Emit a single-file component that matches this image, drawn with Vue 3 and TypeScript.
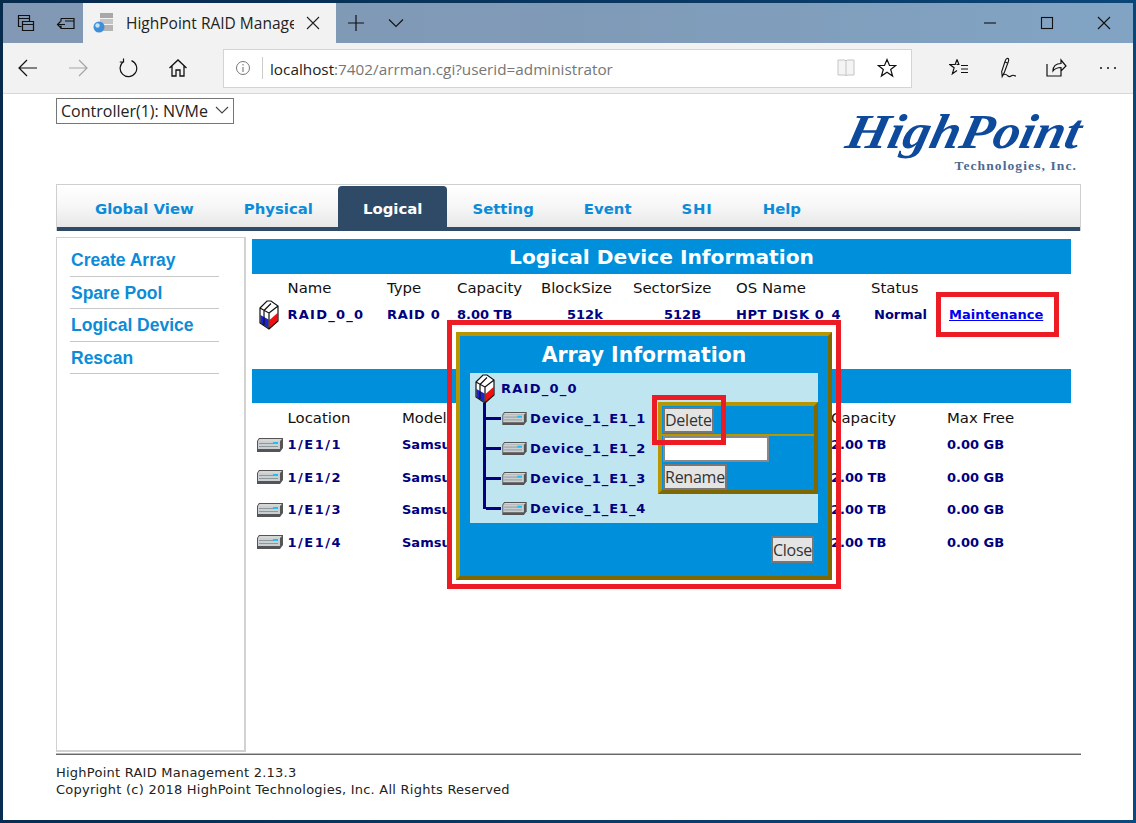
<script setup lang="ts">
const tabs = ['Global View', 'Physical', 'Logical', 'Setting', 'Event', 'SHI', 'Help']
const side = ['Create Array', 'Spare Pool', 'Logical Device', 'Rescan']
const disks = [1, 2, 3, 4]
</script>

<template>
  <div class="window">
    <header class="titlebar">
      <div class="tb-left">
        <svg class="ic" width="20" height="20" viewBox="0 0 20 20"><path d="M2.500 2.500h11v3h-11zM2.500 5.500v8h3M6.500 8.500h11v9h-11zM6.500 11.500h11M13.500 5.500v3" fill="none" stroke="#111" stroke-width="1.200"/></svg>
        <svg class="ic ic2" width="20" height="20" viewBox="0 0 20 20"><path d="M5 5.500h13v10H5v-3M5 8.500v-3M18 8h-9M9 11.500H1.500M4.500 8.500l-3 3 3 3" fill="none" stroke="#111" stroke-width="1.200"/></svg>
      </div>
      <div class="btab">
        <svg width="22" height="22" viewBox="0 0 22 22"><rect x="8" y="1" width="13" height="5" fill="#a8a8a8"/><rect x="8" y="7" width="13" height="5" fill="#c4c4c4"/><rect x="8" y="13" width="13" height="6" fill="#b4b4b4"/><circle cx="7" cy="15" r="5.500" fill="#3d8fd8"/><circle cx="5.500" cy="13.500" r="2.200" fill="#bfe4fb"/></svg>
        <span class="btab-title">HighPoint RAID Manage</span>
        <svg width="14" height="14" viewBox="0 0 14 14"><path d="M1 1l12 12M13 1L1 13" stroke="#222" stroke-width="1.100"/></svg>
      </div>
      <svg class="plus" width="18" height="18" viewBox="0 0 18 18"><path d="M9 1v16M1 9h16" stroke="#111" stroke-width="1.200"/></svg>
      <svg class="chev" width="16" height="10" viewBox="0 0 16 10"><path d="M1 1.500l7 7 7-7" fill="none" stroke="#111" stroke-width="1.100"/></svg>
      <div class="win-ctl">
        <svg width="14" height="14" viewBox="0 0 14 14"><path d="M1 7h12" stroke="#111" stroke-width="1.100"/></svg>
        <svg width="14" height="14" viewBox="0 0 14 14"><rect x="1.500" y="1.500" width="11" height="11" fill="none" stroke="#111" stroke-width="1.100"/></svg>
        <svg width="14" height="14" viewBox="0 0 14 14"><path d="M1 1l12 12M13 1L1 13" stroke="#111" stroke-width="1.100"/></svg>
      </div>
    </header>

    <nav class="toolbar">
      <svg class="t-back" width="20" height="18" viewBox="0 0 20 18"><path d="M1 9h18M9 1L1 9l8 8" fill="none" stroke="#111" stroke-width="1.200"/></svg>
      <svg class="t-fwd" width="20" height="18" viewBox="0 0 20 18"><path d="M1 9h18M11 1l8 8-8 8" fill="none" stroke="#a5a5a5" stroke-width="1.200"/></svg>
      <svg class="t-ref" width="20" height="20" viewBox="0 0 20 20"><path d="M6 3.300A8.300 8.300 0 1 0 13.500 2.600M5.500 .5V4H1.800" fill="none" stroke="#111" stroke-width="1.200"/></svg>
      <svg class="t-home" width="20" height="20" viewBox="0 0 20 20"><path d="M1.500 10L10 2l8.500 8M4 8v10h4v-6h4v6h4V8" fill="none" stroke="#111" stroke-width="1.300"/></svg>
      <div class="address">
        <svg width="16" height="16" viewBox="0 0 16 16"><circle cx="8" cy="8" r="6.500" fill="none" stroke="#777"/><path d="M8 7v5M8 4v1.500" stroke="#777" stroke-width="1.100"/></svg>
        <span class="addr-sep"></span>
        <span class="url"><span class="host">localhost</span>:7402/arrman.cgi?userid=administrator</span>
        <svg class="book" width="20" height="20" viewBox="0 0 20 20"><path d="M2 2h7l1 1 1-1h7v15h-7l-1 1-1-1H2zM10 3v14" fill="#f4f4f4" stroke="#c4c4c4"/></svg>
        <svg class="star" width="20" height="20" viewBox="0 0 20 20"><path d="M10 1.500l2.500 6h6.200l-5 4 1.900 6.500L10 14.300 4.400 18l1.900-6.500-5-4h6.200z" fill="none" stroke="#111" stroke-width="1.200"/></svg>
      </div>
      <div class="t-right">
        <svg width="20" height="20" viewBox="0 0 20 20"><path d="M8 1.500l1.800 4.700M10.500 6.500h-3M8 1.500L6.200 6.500H.8l4.300 3.300-1.700 6 4.600-3.300M12 7.500h7M12 11h7M12 14.500h7" fill="none" stroke="#111" stroke-width="1.200"/></svg>
        <svg class="t-pen" width="22" height="22" viewBox="0 0 22 22"><path d="M9 1.500c1.600-.5 2 1 1.400 3L6.500 15l-2.300 4.500-.5-5L7 4.500c.4-1.300 1-2.700 2-3zM7 5l3 1.200M5 18c2.500-2 3.500-.5 5 1s2.500.5 4-.5 2 .5 4 .5" fill="none" stroke="#111" stroke-width="1.100"/></svg>
        <svg class="t-share" width="22" height="20" viewBox="0 0 22 20"><path d="M2 6v12h14v-5M8 13c0-5 3-7.500 8-7.500V2l5 6-5 5V9.500c-3.500 0-6 1-8 3.500z" fill="none" stroke="#111" stroke-width="1.200"/></svg>
        <svg class="t-dots" width="20" height="6" viewBox="0 0 20 6"><circle cx="3" cy="3" r="1" fill="#111"/><circle cx="10" cy="3" r="1" fill="#111"/><circle cx="17" cy="3" r="1" fill="#111"/></svg>
      </div>
    </nav>

    <main class="page">
      <div class="top">
        <div class="select-wrap">
          <select class="ctrl"><option>Controller(1): NVMe</option></select>
          <svg class="sel-chev" width="14" height="8" viewBox="0 0 14 8"><path d="M1 1l6 6 6-6" fill="none" stroke="#444" stroke-width="1.100"/></svg>
        </div>
        <div class="logo">
          <div class="logo-main">HighPoint</div>
          <div class="logo-sub">Technologies, Inc.</div>
        </div>
      </div>

      <div class="tabs">
        <div v-for="t in tabs" :key="t" class="tab" :class="{ active: t === 'Logical' }">{{ t }}</div>
      </div>

      <div class="content">
        <aside class="sidebar">
          <a v-for="s in side" :key="s" class="side-item">{{ s }}</a>
        </aside>

        <section class="main">
          <div class="bar">Logical Device Information</div>
          <div class="grid-a head head1">
            <span></span><span>Name</span><span>Type</span><span>Capacity</span><span>BlockSize</span><span>SectorSize</span><span>OS Name</span><span>Status</span>
          </div>
          <div class="grid-a val">
            <svg class="raid" width="20" height="30" viewBox="0 0 20 30">
              <path d="M1 8L8 1h4l7 5v15l-9 8-9-6z" fill="#fff"/>
              <path d="M1.500 15l8 4.500v8.500l-8-5z" fill="#1c22d8"/>
              <path d="M10.500 20l8-7v8l-8 7.500z" fill="#ee1111"/>
              <path d="M1 8L8 1h4l7 5v15l-9 8-9-6zM1 8l9 5v16M10 13l9-7M5 10.500V25M5 10.500L12 3.500" fill="none" stroke="#111" stroke-width="1.200"/>
            </svg>
            <span class="ws">RAID_0_0</span><span class="ws-s">RAID 0</span><span>8.00 TB</span><span class="c-block">512k</span><span class="c-sector">512B</span><span class="ws-m">HPT DISK 0_4</span><span class="c-status">Normal</span>
            <a class="maint">Maintenance</a>
          </div>

          <div class="bar bar2"></div>
          <div class="grid-b head head2">
            <span></span><span>Location</span><span>Model</span><span>Capacity</span><span>Max Free</span>
          </div>
          <div v-for="d in disks" :key="d" class="grid-b val2">
            <svg class="disk" width="28" height="16" viewBox="0 0 28 16">
              <path d="M3 1h24v10l-3 4H1V4z" fill="#555"/>
              <path d="M3.500 2H26l-2 2H2z" fill="#d6d6d6"/>
              <rect x="2" y="4" width="22" height="8" fill="#c9cfd3"/>
              <path d="M3 6.500h19M3 9.500h19" stroke="#8e979c"/>
              <rect x="17" y="5" width="5" height="2" fill="#17c4ee"/>
            </svg>
            <span class="ws-l">1/E1/{{ d }}</span><span class="model">Samsung</span><span>2.00 TB</span><span>0.00 GB</span>
          </div>

          <div class="mark mark-maint"></div>
        </section>
      </div>

      <footer class="footer">
        <div>HighPoint RAID Management 2.13.3</div>
        <div>Copyright (c) 2018 HighPoint Technologies, Inc. All Rights Reserved</div>
      </footer>

      <div class="mark mark-dialog"></div>
      <div class="dialog">
        <h2 class="dlg-title">Array Information</h2>
        <div class="panel">
          <div class="tree">
            <div class="tree-root">
              <svg class="raid raid-s" width="20" height="30" viewBox="0 0 20 30">
                <path d="M1 8L8 1h4l7 5v15l-9 8-9-6z" fill="#fff"/>
                <path d="M1.500 15l8 4.500v8.500l-8-5z" fill="#1c22d8"/>
                <path d="M10.500 20l8-7v8l-8 7.500z" fill="#ee1111"/>
                <path d="M1 8L8 1h4l7 5v15l-9 8-9-6zM1 8l9 5v16M10 13l9-7M5 10.500V25M5 10.500L12 3.500" fill="none" stroke="#111" stroke-width="1.200"/>
              </svg>
              <span class="ws">RAID_0_0</span>
            </div>
            <div class="tree-kids">
              <div v-for="d in disks" :key="d" class="tree-row">
                <span class="branch"></span>
                <svg class="disk" width="27" height="15" viewBox="0 0 28 16">
                  <path d="M3 1h24v10l-3 4H1V4z" fill="#555"/>
                  <path d="M3.500 2H26l-2 2H2z" fill="#d6d6d6"/>
                  <rect x="2" y="4" width="22" height="8" fill="#c9cfd3"/>
                  <path d="M3 6.500h19M3 9.500h19" stroke="#8e979c"/>
                  <rect x="17" y="5" width="5" height="2" fill="#17c4ee"/>
                </svg>
                <span class="ws-d">Device_1_E1_{{ d }}</span>
              </div>
            </div>
          </div>
          <div class="actions">
            <div class="act-row"><button class="btn">Delete</button></div>
            <div class="act-row2">
              <input class="name-input" type="text" />
              <button class="btn">Rename</button>
            </div>
          </div>
        </div>
        <div class="dlg-foot"><button class="btn">Close</button></div>
      </div>
      <div class="mark mark-delete"></div>
    </main>
  </div>
</template>

<style scoped>
.window {
  width: 1136px;
  height: 823px;
  box-sizing: border-box;
  padding: 3px;
  background: linear-gradient(100deg, #062a4c 0%, #0a3a66 60%, #0b4a7e 100%);
  display: flex;
  flex-direction: column;
  overflow: hidden;
}
.titlebar {
  height: 40px;
  flex: none;
  display: flex;
  align-items: center;
  background: linear-gradient(90deg, #8298b4 0%, #7f9ab7 50%, #82a4c4 100%);
}
.tb-left { display: flex; align-items: center; width: 80px; }
.ic { margin-left: 13px; }
.ic2 { margin-left: 20px; }
.btab {
  width: 253px;
  height: 40px;
  background: #f2f2f2;
  display: flex;
  align-items: center;
  padding-left: 9px;
  box-sizing: border-box;
}
.btab-title {
  font: 15.5px "Open Sans", sans-serif;
  color: #222;
  width: 168px;
  margin-left: 12px;
  margin-right: 12px;
  overflow: hidden;
  white-space: nowrap;
}
.plus { margin-left: 11px; }
.chev { margin-left: 23px; }
.win-ctl { margin-left: auto; display: flex; gap: 43px; margin-right: 22px; }
.toolbar {
  height: 50px;
  flex: none;
  background: #f2f2f2;
  border-bottom: 1px solid #d8d8d8;
  display: flex;
  align-items: center;
  position: relative;
}
.t-back { margin-left: 15px; }
.t-fwd { margin-left: 30px; }
.t-ref { margin-left: 30px; }
.t-home { margin-left: 30px; }
.address {
  margin-left: 35px;
  width: 689px;
  height: 39px;
  box-sizing: border-box;
  border: 1px solid #d4d4d4;
  background: #fff;
  display: flex;
  align-items: center;
  padding-left: 11px;
}
.addr-sep { width: 1px; height: 22px; background: #ccc; margin: 0 7px 0 11px; }
.url { font: 15.3px "Open Sans", sans-serif; color: #767676; padding-top: 1px; }
.host { color: #222; }
.book { margin-left: auto; }
.star { margin: 0 14px 0 21px; }
.t-right { margin-left: 37px; display: flex; align-items: center; }
.t-pen { margin-left: 29px; }
.t-share { margin-left: 25px; }
.t-dots { margin-left: 31px; }

.page {
  flex: 1;
  min-height: 0;
  background: #fff;
  position: relative;
  padding: 4px 52px 0 53px;
  display: flex;
  flex-direction: column;
  font-family: "DejaVu Sans", sans-serif;
}
.top { height: 86px; flex: none; display: flex; justify-content: space-between; }
.select-wrap { position: relative; width: 178px; height: 26px; }
.ctrl {
  appearance: none;
  width: 178px;
  height: 26px;
  box-sizing: border-box;
  border: 1px solid #767676;
  background: #fff;
  padding: 0 0 0 4px;
  font: 16px "Open Sans", sans-serif;
  color: #222;
  border-radius: 0;
}
.sel-chev { position: absolute; right: 5px; top: 8px; pointer-events: none; }
.logo { width: 239px; padding-top: 11px; text-align: right; }
.logo-main {
  font: italic bold 49px/46px "Liberation Serif", serif;
  color: #0d4a9c;
  white-space: nowrap;
  transform-origin: right center;
  transform: scaleX(1.1) skewX(-12deg);
}
.logo-sub {
  font: bold 13.5px/14px "Liberation Serif", serif;
  letter-spacing: 1.1px;
  color: #4b6b92;
  margin-right: 4px;
  margin-top: 4px;
}
.tabs {
  height: 47px;
  flex: none;
  box-sizing: border-box;
  border: 1px solid #cfcfcf;
  border-bottom: 0;
  background: linear-gradient(#fff 0%, #f7f7f7 45%, #e4e4e4 100%);
  box-shadow: inset 0 -4px 0 #2f4a66;
  display: flex;
  padding: 1px 0 0 13px;
}
.tab {
  padding: 0 25px;
  height: 43px;
  font: bold 14.9px/46px "DejaVu Sans", sans-serif;
  color: #0c8cd8;
  white-space: nowrap;
}
.tab:nth-child(6) { letter-spacing: .8px; }
.tab.active {
  background: #2f4a66;
  color: #fff;
  border-radius: 4px 4px 0 0;
  height: 44px;
}
.content { flex: 1; min-height: 0; display: flex; padding-top: 6px; }
.sidebar {
  width: 190px;
  height: 515px;
  box-sizing: border-box;
  border: 2px solid #d2d2d2;
  border-width: 1px 2px 2px 1px;
  padding: 6px 25px 0 13px;
  display: flex;
  flex-direction: column;
}
.side-item {
  height: 32.5px;
  box-sizing: border-box;
  border-bottom: 1px solid #c8c8c8;
  padding-left: 1px;
  font: bold 17.5px/33px "Liberation Sans", sans-serif;
  color: #0c8cd8;
}
.main { width: 819px; margin-left: 6px; padding-top: 2px; position: relative; }
.bar {
  height: 35px;
  background: #008fdb;
  color: #fff;
  text-align: center;
  font: bold 20.2px/36px "DejaVu Sans", sans-serif;
}
.bar2 { height: 34px; }
.grid-a {
  display: grid;
  grid-template-columns: 35.5px 99.5px 70px 84px 92px 103px 135px 78px 1fr;
  align-items: center;
}
.grid-b {
  display: grid;
  grid-template-columns: 35.5px 114.5px 429px 116px 1fr;
  align-items: center;
}
.head { font-size: 14.9px; color: #111; box-sizing: border-box; }
.head1 { height: 26px; padding-top: 2px; }
.head2 { height: 25.5px; padding-top: 5px; }
.val {
  height: 69px;
  padding-bottom: 39px;
  box-sizing: border-box;
  font-size: 13px;
  font-weight: 700;
  color: #000080;
  white-space: nowrap;
}
.val > span, .val > a { margin-bottom: 2px; }
.val2 { height: 32.5px; font-size: 13px; font-weight: 700; color: #000080; white-space: nowrap; }
.raid { margin-left: 7px; }
.disk { flex: none; }
.val2 .disk { margin-left: 4px; }
.ws { letter-spacing: 1.25px; }
.ws-s { letter-spacing: .7px; }
.ws-m { letter-spacing: .6px; }
.ws-l { letter-spacing: 1.5px; }
.ws-d { letter-spacing: .9px; }
.c-block { padding-left: 26px; }
.c-sector { padding-left: 31px; }
.c-status { padding-left: 3px; }
.maint { color: #0000ee; text-decoration: underline; }
.model { width: 50px; overflow: hidden; }
.footer {
  border-top: 1px solid #666;
  box-shadow: 0 -1px 0 #bbb;
  padding-top: 9px;
  font-size: 13px;
  letter-spacing: .24px;
  line-height: 17px;
  color: #222;
  position: absolute;
  left: 53px;
  right: 52px;
  top: 660px;
}
.dialog {
  position: absolute;
  left: 453px;
  top: 238px;
  width: 376px;
  height: 248px;
  box-sizing: border-box;
  border: 4px solid;
  border-color: #b89600 #806800 #806800 #b89600;
  background: #008fdb;
  padding: 0 10px;
  display: flex;
  flex-direction: column;
}
.dlg-title {
  margin: 0;
  height: 37px;
  text-align: center;
  color: #fff;
  font: bold 20.4px/38px "DejaVu Sans", sans-serif;
}
.panel {
  height: 150px;
  background: #bee5f0;
  display: flex;
  position: relative;
  font-size: 13px;
  font-weight: 700;
  color: #000080;
  white-space: nowrap;
}
.tree { width: 183px; padding-left: 5px; flex: none; }
.tree-root { height: 30px; padding-top: 1px; box-sizing: border-box; display: flex; align-items: center; gap: 6px; }
.raid-s { margin-left: 0; flex: none; }
.tree-kids { margin-left: 8px; border-left: 3px solid #000080; height: 106px; }
.tree-row { height: 30px; display: flex; align-items: center; }
.branch { width: 15px; height: 3px; background: #000080; flex: none; }
.tree-row .disk { margin-right: 2px; }
.actions {
  width: 160px;
  height: 92px;
  margin-top: 29px;
  box-sizing: border-box;
  border: 4px solid;
  border-color: #b89600 #806800 #806800 #b89600;
  background: #008fdb;
  flex: none;
  display: flex;
  flex-direction: column;
}
.act-row { height: 30px; border-bottom: 2px solid #b89600; padding: 1px 0 0 1px; box-sizing: border-box; flex: none; }
.act-row2 { padding-left: 1px; display: flex; flex-direction: column; align-items: flex-start; gap: 2px; }
.btn {
  height: 26px;
  box-sizing: border-box;
  border: 2px solid #777;
  background: #e4e4e4;
  padding: 0;
  letter-spacing: -.25px;
  font: 16px/20px "Open Sans", sans-serif;
  color: #333;
}
.name-input {
  width: 106px;
  height: 26px;
  box-sizing: border-box;
  border: 2px solid #888;
  background: #fff;
  padding: 0;
}
.dlg-foot { display: flex; justify-content: flex-end; margin-top: 13px; margin-right: 4px; }
.dlg-foot .btn { height: 27px; width: 43px; }
.mark { position: absolute; border: 5px solid #ed1c24; box-sizing: border-box; pointer-events: none; }
.mark-maint { left: 684px; top: 55px; width: 123px; height: 45px; }
.mark-dialog { left: 444px; top: 226px; width: 394px; height: 269px; }
.mark-delete { left: 649px; top: 301px; width: 74px; height: 50px; }
</style>
